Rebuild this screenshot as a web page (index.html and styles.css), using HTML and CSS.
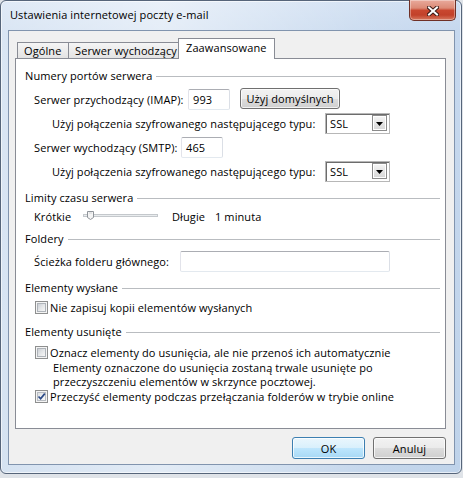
FILE: index.html
```html
<!DOCTYPE html>
<html lang="pl">
<head>
<meta charset="utf-8">
<title>Ustawienia internetowej poczty e-mail</title>
<link rel="stylesheet" href="styles.css">
</head>
<body>
<div class="window">
  <div class="titlebar">
    <span class="title">Ustawienia internetowej poczty e-mail</span>
    <button class="close" aria-label="Zamknij">
      <svg width="12" height="10" viewBox="0 0 12 10">
        <path d="M2 1.5 L10 8.5 M10 1.5 L2 8.5" stroke="#3b1a16" stroke-width="4" stroke-linecap="square"/>
        <path d="M2 1.5 L10 8.5 M10 1.5 L2 8.5" stroke="#ffffff" stroke-width="2" stroke-linecap="square"/>
      </svg>
    </button>
  </div>

  <div class="client">
    <div class="tabs">
      <div class="tab tab-general">Ogólne</div>
      <div class="tab tab-outgoing">Serwer wychodzący</div>
      <div class="tab tab-advanced active">Zaawansowane</div>
    </div>

    <div class="panel">
      <div class="group-title g-ports">Numery portów serwera</div>

      <div class="row r-imap">
        <span class="lbl lbl-imap">Serwer przychodzący (IMAP):</span>
        <div class="textbox port">993</div>
        <button class="btn btn-defaults">Użyj domyślnych</button>
      </div>

      <div class="row r-enc">
        <span class="lbl lbl-enc">Użyj połączenia szyfrowanego następującego typu:</span>
        <div class="combo">
          <span class="combo-value">SSL</span>
          <span class="combo-arrow"><svg width="7" height="4" viewBox="0 0 7 4"><path d="M0 0 H7 L3.5 4 Z" fill="#000"/></svg></span>
        </div>
      </div>

      <div class="row r-smtp">
        <span class="lbl lbl-smtp">Serwer wychodzący (SMTP):</span>
        <div class="textbox port">465</div>
      </div>

      <div class="row r-enc">
        <span class="lbl lbl-enc">Użyj połączenia szyfrowanego następującego typu:</span>
        <div class="combo">
          <span class="combo-value">SSL</span>
          <span class="combo-arrow"><svg width="7" height="4" viewBox="0 0 7 4"><path d="M0 0 H7 L3.5 4 Z" fill="#000"/></svg></span>
        </div>
      </div>

      <div class="group-title g-timeout">Limity czasu serwera</div>

      <div class="row r-slider">
        <span class="lbl lbl-short">Krótkie</span>
        <svg class="slider" width="75" height="18" viewBox="0 0 75 18">
          <rect x="0.5" y="7.5" width="74" height="2" fill="#e9ecee" stroke="#c4c8cc"/>
          <path d="M4.5 4.5 H10.5 V10.5 L7.5 12.5 L4.5 10.5 Z" fill="#f4f4f4" stroke="#8f949a"/>
          <path d="M6 6 H9" stroke="#d0d3d6"/>
        </svg>
        <span class="lbl lbl-long">Długie</span>
        <span class="lbl">1 minuta</span>
      </div>

      <div class="group-title g-folders">Foldery</div>

      <div class="row r-path">
        <span class="lbl lbl-path">Ścieżka folderu głównego:</span>
        <div class="textbox path"></div>
      </div>

      <div class="group-title g-sent">Elementy wysłane</div>

      <div class="row r-check r-nosave">
        <span class="check"><span class="check-inner"></span></span>
        <span class="lbl">Nie zapisuj kopii elementów wysłanych</span>
      </div>

      <div class="group-title g-deleted">Elementy usunięte</div>

      <div class="row r-check r-mark">
        <span class="check"><span class="check-inner"></span></span>
        <span class="lbl">Oznacz elementy do usunięcia, ale nie przenoś ich automatycznie</span>
      </div>

      <p class="note">Elementy oznaczone do usunięcia zostaną trwale usunięte po<br>przeczyszczeniu elementów w skrzynce pocztowej.</p>

      <div class="row r-check r-purge">
        <span class="check checked">
          <span class="check-inner"></span>
          <svg class="tick" width="11" height="11" viewBox="0 0 11 11"><path d="M2.5 5.5 L4.6 7.8 L8.8 2.6" fill="none" stroke="#2c4a87" stroke-width="1.7"/></svg>
        </span>
        <span class="lbl">Przeczyść elementy podczas przełączania folderów w trybie online</span>
      </div>
    </div>

    <div class="footer">
      <button class="btn btn-action btn-ok">OK</button>
      <button class="btn btn-action">Anuluj</button>
    </div>
  </div>
</div>
</body>
</html>
```

FILE: styles.css
```css
html, body {
  margin: 0;
  padding: 0;
}

body {
  width: 463px;
  height: 478px;
  overflow: hidden;
  background: #dfe3e8;
  font-family: "Open Sans", "Noto Sans", sans-serif;
  font-size: 11px;
  letter-spacing: 0.1px;
  color: #000;
}

button {
  font: inherit;
  letter-spacing: inherit;
  color: inherit;
  margin: 0;
  padding: 0;
}

/* window frame */
.window {
  width: 462px;
  box-sizing: border-box;
  border: 1px solid #56657a;
  border-radius: 6px;
  padding: 0 6px 8px 7px;
  background:
    linear-gradient(90deg, rgba(255,255,255,0.35) 0%, rgba(255,255,255,0.55) 35%, rgba(255,255,255,0.1) 80%, rgba(255,255,255,0) 100%),
    linear-gradient(180deg, #cfdff2 0%, #c6d8ee 30px, #bfd3ea 100%);
  box-shadow: inset 0 0 0 1px rgba(255,255,255,0.6);
}

.titlebar {
  height: 29px;
  display: flex;
  align-items: flex-start;
  justify-content: space-between;
  padding-left: 2px;
}

.title {
  line-height: 28px;
  white-space: nowrap;
}

.close {
  width: 47px;
  height: 21px;
  margin-top: -1px;
  margin-right: -1px;
  box-sizing: border-box;
  border: 1px solid #6f3026;
  border-top: none;
  border-radius: 0 0 5px 5px;
  background: linear-gradient(180deg, #e9aa9c 0%, #dc8a76 40%, #c9472f 52%, #c2412a 75%, #d7785f 100%);
  box-shadow: inset 0 0 0 1px rgba(255,255,255,0.35);
  display: flex;
  align-items: center;
  justify-content: center;
  cursor: default;
}

.close svg {
  display: block;
  margin-top: 1px;
}

/* client area */
.client {
  background: #f0f0f0;
  border: 1px solid #8194ae;
  padding: 7px 8px 5px 6px;
}

.tabs {
  display: flex;
  align-items: flex-end;
  height: 20px;
  padding-left: 2px;
}

.tab {
  box-sizing: border-box;
  height: 16px;
  border: 1px solid #898c95;
  border-bottom: none;
  background: linear-gradient(180deg, #f5f5f5 0%, #ececec 50%, #e3e3e3 100%);
  line-height: 15px;
  padding-left: 6px;
  white-space: nowrap;
}

.tab-general { width: 52px; }
.tab-outgoing { width: 111px; margin-left: -1px; }

.tab-advanced {
  width: 97px;
  margin-left: -1px;
}

.tab.active {
  height: 21px;
  margin-bottom: -1px;
  background: #fff;
  line-height: 18px;
  padding-left: 7px;
  position: relative;
  z-index: 1;
}

.panel {
  height: 371px;
  box-sizing: border-box;
  border: 1px solid #898c95;
  background: #fff;
  padding: 9px 5px 0 9px;
  display: flex;
  flex-direction: column;
}

/* section separators */
.group-title {
  display: flex;
  align-items: center;
  height: 15px;
  line-height: 15px;
  white-space: nowrap;
}

.group-title::after {
  content: "";
  flex: 1;
  border-top: 1px solid #b9bcc0;
  margin-left: 4px;
  margin-top: 1px;
}

.g-timeout { margin-top: 8px; }
.g-folders { margin-top: 6px; }
.g-sent { margin-top: 8px; }
.g-deleted { margin-top: 9px; }

.row {
  display: flex;
  align-items: center;
  height: 22px;
  white-space: nowrap;
  padding-left: 9px;
}

.r-imap { margin-top: 5px; }
.r-enc, .r-smtp { margin-top: 2px; }
.r-enc { padding-left: 27px; }

.lbl { flex: none; }
.lbl-imap { width: 154px; }
.lbl-smtp { width: 147px; }
.lbl-enc { width: 273px; }
.lbl-path { width: 146px; }
.lbl-short { width: 49px; }
.lbl-long { width: 43px; }

.textbox {
  box-sizing: border-box;
  height: 21px;
  border: 1px solid;
  border-color: #abadb3 #dbdfe6 #e3e9ef #e2e3ea;
  border-radius: 2px;
  background: #fff;
  line-height: 19px;
  padding-left: 4px;
}

.port { width: 42px; }
.path { width: 210px; }

/* push buttons */
.btn {
  box-sizing: border-box;
  border: 1px solid #707070;
  border-radius: 3px;
  background: linear-gradient(180deg, #f2f2f2 0%, #ebebeb 50%, #dddddd 51%, #cfcfcf 100%);
  box-shadow: inset 0 0 0 1px rgba(255,255,255,0.75);
  text-align: center;
  cursor: default;
}

.btn-defaults {
  width: 100px;
  height: 21px;
  margin-left: 10px;
  margin-top: -1px;
}

.combo {
  box-sizing: border-box;
  width: 65px;
  height: 21px;
  border: 1px solid #b7b7b7;
  background: #fff;
  box-shadow: inset 1px 1px 0 #6c6c6c;
  display: flex;
  align-items: center;
  justify-content: space-between;
  padding: 0 2px 0 4px;
}

.combo-arrow {
  box-sizing: border-box;
  width: 15px;
  height: 16px;
  border: 1px solid #8b8b8b;
  background: linear-gradient(180deg, #f6f6f6 0%, #e6e6e6 50%, #d6d6d6 100%);
  box-shadow: inset 0 0 0 1px #ffffff;
  display: flex;
  align-items: center;
  justify-content: center;
}

.combo-arrow svg { display: block; margin-top: 1px; }

.r-slider {
  height: 18px;
  margin-top: 2px;
}

.slider {
  display: block;
  flex: none;
  margin-right: 14px;
}

.r-path { margin-top: 4px; }

/* check boxes */
.r-check {
  height: 16px;
  padding-left: 10px;
}

.r-nosave { margin-top: 4px; }
.r-mark { margin-top: 5px; }
.r-purge { height: 15px; }

.check {
  flex: none;
  width: 13px;
  height: 13px;
  box-sizing: border-box;
  border: 1px solid #8e8f8f;
  background: #f4f4f4;
  padding: 1px;
  margin-right: 2px;
  position: relative;
}

.check-inner {
  display: block;
  box-sizing: border-box;
  width: 9px;
  height: 9px;
  border: 1px solid #aeb3b9;
  background: linear-gradient(135deg, #cbcfd5 0%, #e4e6e8 50%, #f6f6f6 100%);
}

.checked .check-inner {
  border-color: #b8bcc2;
  background: linear-gradient(135deg, #dde0e4 0%, #f0f1f2 60%, #fafafa 100%);
}

.tick {
  position: absolute;
  left: 0;
  top: 0;
}

.note {
  margin: 1px 0 0 0;
  padding-left: 28px;
  line-height: 14px;
  white-space: nowrap;
}

.footer {
  display: flex;
  justify-content: flex-end;
  gap: 8px;
  margin-top: 8px;
}

.btn-action {
  width: 73px;
  height: 22px;
}

.btn-ok {
  border-color: #3c7fb1;
  background: linear-gradient(180deg, #eaf6fd 0%, #d9f0fc 50%, #bee6fd 51%, #a7d9f5 100%);
}
```
